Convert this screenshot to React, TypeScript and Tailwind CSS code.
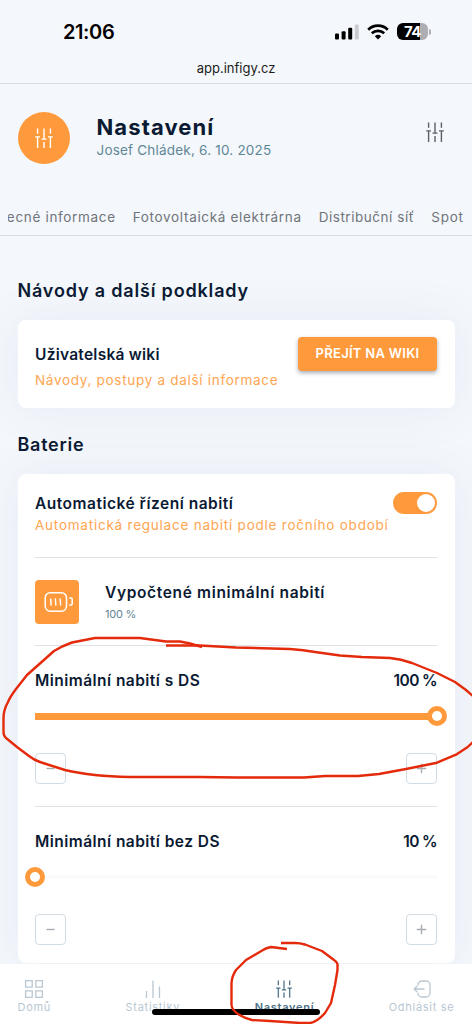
import type { ReactNode } from "react";

function SlidersIcon({ className }: { className?: string }) {
  return (
    <svg className={className} viewBox="0 0 18 20" fill="none" stroke="currentColor" strokeWidth={1.4}>
      <path d="M2.6 0.5v5.3M2.6 8.9v11M0.2 8.9h4.8" />
      <path d="M9 0.5v10.6M9 13.9v6M6.5 11.1h5" />
      <path d="M15.4 0.5v5.3M15.4 8.9v11M13 8.9h4.8" />
    </svg>
  );
}

function BatteryIcon() {
  return (
    <svg className="h-6 w-8" viewBox="0 0 32 24" fill="none" stroke="currentColor" strokeWidth={1.5} strokeLinecap="round">
      <rect x="4.2" y="2.7" width="21.3" height="18.6" rx="5" />
      <path d="M9.7 9l.4 6M14.4 9l.4 6M19.2 9l.4 6" />
      <path d="M28.8 8h1.2a1.2 1.2 0 0 1 1.2 1.2v4.6a1.2 1.2 0 0 1-1.2 1.2h-1.2" />
    </svg>
  );
}

function StatusBar() {
  return (
    <div className="h-[84px] border-b border-[#d9dde3] text-black">
      <div className="flex h-[58px] items-center justify-between pt-[5px] pr-[41px] pl-[63px]">
        <span className="text-[20px] leading-6 font-semibold tracking-[-0.02em]">21:06</span>
        <div className="flex items-center">
          <svg className="h-4 w-6" viewBox="0 0 24 16">
            <rect x="0" y="9.5" width="4" height="6" rx="1" />
            <rect x="6.6" y="7.3" width="4" height="8.2" rx="1" />
            <rect x="13.2" y="3.8" width="4" height="11.7" rx="1" />
            <rect x="19.8" y="0.5" width="4" height="15" rx="1" fill="#c9cbd0" />
          </svg>
          <svg className="ml-2 h-4 w-[22px]" viewBox="0 0 22 16" fill="none" stroke="black" strokeWidth={2.7}>
            <path d="M1.2 5.7a14 14 0 0 1 19.6 0" />
            <path d="M4.8 9.3a9 9 0 0 1 12.4 0" />
            <path d="M11 15.5l-3.2-3.3a4.7 4.7 0 0 1 6.4 0z" fill="black" stroke="none" />
          </svg>
          <div className="ml-[8px] flex h-[17px] w-[31px] items-center justify-center rounded-[6px] bg-linear-to-r from-black from-74% to-[#acaeb3] to-74%">
            <span className="text-[15px] leading-none font-bold tracking-[-0.04em] text-white">74</span>
          </div>
          <div className="ml-px h-[6px] w-[2px] rounded-r-full bg-[#acaeb3]" />
        </div>
      </div>
      <p className="text-center text-[13px] leading-5 text-[#1c1c20]">app.infigy.cz</p>
    </div>
  );
}

function Slider({ label, value, full }: { label: string; value: string; full?: boolean }) {
  return (
    <div className="h-[160px] pt-[23.5px]">
      <div className="flex justify-between text-[15.5px] leading-[22px] font-semibold text-[#0b1a33]">
        <span className="tracking-[0.03em]">{label}</span>
        <span className="tracking-[-0.04em]">{value}</span>
      </div>
      <div className="mt-[14px] flex h-[21px] items-center">
        {!full && <div className="-ml-[10px] size-[20px] shrink-0 rounded-full border-[5px] border-[#ff9a3c] bg-white" />}
        <div className={full ? "h-[7px] flex-1 bg-[#ff9a3c]" : "h-[4px] flex-1 bg-[#fafbfd]"} />
        {full && <div className="-mr-[10px] -ml-[10px] size-[20px] shrink-0 rounded-full border-[5px] border-[#ff9a3c] bg-white" />}
      </div>
      <div className="mt-[26.5px] flex justify-between">
        <StepButton />
        <StepButton plus />
      </div>
    </div>
  );
}

function StepButton({ plus }: { plus?: boolean }) {
  return (
    <button className="flex size-[31px] items-center justify-center rounded-[4px] border border-[#d3dce3] text-[#a9adb2]">
      <svg className="size-[11px]" viewBox="0 0 11 11" stroke="currentColor" strokeWidth={1.4}>
        <path d={plus ? "M0.8 5.5h9.4M5.5 0.8v9.4" : "M1.5 5.5h8"} />
      </svg>
    </button>
  );
}

function NavItem({ label, active, children }: { label: string; active?: boolean; children: ReactNode }) {
  return (
    <div
      className={
        active
          ? "flex flex-col items-center font-semibold text-[#4b7186]"
          : "flex flex-col items-center text-[#b9c7d2]"
      }
    >
      {children}
      <span className="text-[11px] leading-[16px] tracking-[0.065em]">{label}</span>
    </div>
  );
}

// Hand-drawn marks over the slider and the active nav item
function Marks() {
  return (
    <svg
      className="pointer-events-none absolute inset-0 z-20 h-[1024px] w-[472px]"
      viewBox="0 0 472 1024"
      fill="none"
      stroke="#e42a0b"
      strokeWidth={2.4}
      strokeLinejoin="round"
    >
      <path d="M202 647L190 643.5L180 641.5L166 641.5L140 638H95L72 642.5Q62 646 54 651L27 675L16 689Q10 697 8 702Q3.5 710 3.5 718V731Q3.5 736 6 738L17 747L29 756Q34 760 40 762L65 770Q78 773 95 775Q110 776.5 130 777H200L236 777.5H304L325 776H358L379 774L406 769L437 762.7L456 754.7L467.7 747L474 741" />
      <path d="M166 645.5H200L236 647.5L290 649Q304 650 315 652L340 655.5L362 657L390 658Q401 659 412 663L437 673L455 682L466 690L474 697" />
      <path d="M281 943H295Q300 943 305 944.5L322 951L334 960Q337 962 337.5 964V970L335 985L331 1003L325 1013Q317 1022 310 1023H300L270 1021L252 1020Q244 1018 238 1014Q232 1010 231.5 1005V983Q232 976 236 970L246 960L263 950Q266 948 271 947L287 949" />
    </svg>
  );
}

export default function App() {
  return (
    <div className="relative flex h-[1024px] w-[472px] flex-col overflow-hidden bg-[#f4f7fc] font-['Inter','Open_Sans',sans-serif] whitespace-nowrap">
      <StatusBar />

      {/* Page header */}
      <header className="h-[152px] shrink-0 border-b border-[#d9dde3] pt-[28px]">
        <div className="flex px-[18px]">
          <div className="flex size-[52px] items-center justify-center rounded-full bg-[#ff9a3c] text-white">
            <SlidersIcon className="h-5 w-[18px]" />
          </div>
          <div className="ml-[26.5px] flex-1">
            <h1 className="text-[22px] leading-[30px] font-bold tracking-[0.05em] text-[#0b1a33]">Nastavení</h1>
            <p className="text-[13.5px] leading-[16px] tracking-[0.015em] text-[#5f8795]">Josef Chládek, 6. 10. 2025</p>
          </div>
          <SlidersIcon className="mt-[10px] mr-[10.5px] h-5 w-[18px] text-[#5c6067]" />
        </div>
        <nav className="mt-[43px] ml-[8px] flex justify-end gap-[17px] overflow-hidden pr-[8.5px] text-[13.5px] leading-5 tracking-[0.05em] text-[#707479]">
          <span>Obecné informace</span>
          <span>Fotovoltaická elektrárna</span>
          <span className="tracking-[0.04em]">Distribuční síť</span>
          <span>Spot</span>
        </nav>
      </header>

      <main className="h-[728px] shrink-0 overflow-hidden px-[17.5px] pt-[43px]">
        <h2 className="text-[18px] leading-6 font-semibold tracking-[0.046em] text-[#0b1a33]">Návody a další podklady</h2>
        <section className="mt-[17px] flex h-[88px] justify-between rounded-[8px] bg-white px-[17.5px] pt-[17px] shadow-[0_0_50px_rgba(80,105,140,0.08)]">
          <div className="pt-[7px]">
            <h3 className="text-[15.5px] leading-[22px] font-semibold tracking-[0.016em] text-[#0b1a33]">Uživatelská wiki</h3>
            <p className="mt-[4px] text-[13.5px] leading-5 tracking-[0.052em] text-[#ffa552]">Návody, postupy a další informace</p>
          </div>
          <button className="h-[34px] w-[139px] rounded-[4px] bg-[#ff9a3c] text-[13px] font-semibold tracking-[0.022em] text-white shadow-[0_2px_4px_rgba(60,70,90,0.45)]">
            PŘEJÍT NA WIKI
          </button>
        </section>

        <h2 className="mt-[25px] text-[18px] leading-6 font-semibold tracking-[0.04em] text-[#0b1a33]">Baterie</h2>
        <section className="mt-[17px] h-[489px] rounded-[8px] bg-white px-[17.5px] shadow-[0_0_50px_rgba(80,105,140,0.08)]">
          <div className="flex h-[84px] justify-between border-b border-[#dfe3e7] pt-[18px]">
            <div className="w-[354px] pt-[1px]">
              <h3 className="text-[15.5px] leading-[22px] font-semibold tracking-[0.033em] text-[#0b1a33]">Automatické řízení nabití</h3>
              <p className="text-[13.5px] leading-[21px] tracking-[0.057em] text-[#ffa552]">
                Automatická regulace nabití podle ročního období
              </p>
            </div>
            <div className="flex h-[22px] w-[44px] shrink-0 justify-end rounded-full bg-[#ff9a3c] p-[2px]">
              <div className="size-[18px] rounded-full bg-white" />
            </div>
          </div>
          <div className="flex h-[88px] items-center border-b border-[#dfe3e7]">
            <div className="flex size-[44px] items-center justify-center rounded-[4px] bg-[#ff9a3c] text-white">
              <BatteryIcon />
            </div>
            <div className="ml-[26px] pt-[1px]">
              <h3 className="text-[15.5px] leading-[23px] font-semibold tracking-[0.042em] text-[#0b1a33]">Vypočtené minimální nabití</h3>
              <p className="text-[11px] leading-5 tracking-[-0.02em] text-[#5f8795]">100 %</p>
            </div>
          </div>
          <div className="border-b border-[#dfe3e7]">
            <Slider label="Minimální nabití s DS" value="100 %" full />
          </div>
          <Slider label="Minimální nabití bez DS" value="10 %" />
        </section>
      </main>

      <footer className="z-10 flex h-[60px] shrink-0 justify-between bg-white px-[17.5px] pt-[15px]">
        <NavItem label="Domů">
          <svg className="h-[20px] w-[20px]" viewBox="0 0 20 20" fill="none" stroke="currentColor" strokeWidth={1.3}>
            <path d="M1.6 1.6h6.6v6.6H1.6zM11.8 1.6h6.6v6.6h-6.6zM1.6 11.8h6.6v6.6H1.6zM11.8 11.8h6.6v6.6h-6.6z" />
          </svg>
        </NavItem>
        <NavItem label="Statistiky">
          <svg className="h-[20px] w-[20px]" viewBox="0 0 20 20" fill="none" stroke="currentColor" strokeWidth={1.3}>
            <path d="M3.5 12v7M10 1.5V19M16.5 7.5V19" />
          </svg>
        </NavItem>
        <NavItem label="Nastavení" active>
          <SlidersIcon className="my-px h-[18px] w-[16px]" />
        </NavItem>
        <NavItem label="Odhlásit se">
          <svg className="h-[20px] w-[20px]" viewBox="0 0 20 20" fill="none" stroke="currentColor" strokeWidth={1.3}>
            <path d="M6 6.5V6a4 4 0 0 1 4-4h4a4 4 0 0 1 4 4v8a4 4 0 0 1-4 4h-4a4 4 0 0 1-4-4v-.5" />
            <path d="M12.5 10H2.2M5.2 7l-3 3 3 3" />
          </svg>
        </NavItem>
      </footer>

      {/* Home indicator */}
      <div className="absolute top-[1009px] left-[152px] z-10 h-[6px] w-[168px] rounded-full bg-black" />
      <Marks />
    </div>
  );
}
